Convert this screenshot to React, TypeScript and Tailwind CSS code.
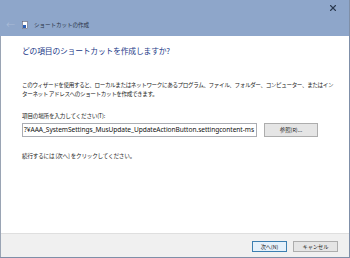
import React from 'react'
import { X } from 'lucide-react'

const JP = { fontFamily: '"Noto Sans CJK JP", "Noto Sans", sans-serif' }

export default function App() {
  return (
    <div
      className="w-[350px] h-[258px] flex flex-col bg-[#8ea6ca] border-r border-b border-[#7f8fa8] overflow-hidden"
      style={JP}
    >
      {/* Title bar */}
      <div className="h-[36px] shrink-0 relative flex items-end pb-[7px] pl-[6px]">
        <span className="text-[9px] leading-none text-[#a9bbd6] mr-[7px]">←</span>
        <svg width="6" height="8" viewBox="0 0 6 8" className="mr-[6px]">
          <rect x="0.5" y="0.5" width="5" height="7" fill="#fff" stroke="#667" strokeWidth="0.6" />
          <rect x="1" y="4" width="3" height="3" fill="#2b5fb5" />
        </svg>
        <span className="text-[5.6px] leading-none text-[#2a3445] tracking-[-0.1px]">ショートカットの作成</span>
        <X size={10} strokeWidth={2.6} className="absolute right-[11px] top-[3px] text-[#2c3a50]" />
      </div>

      {/* Content */}
      <div className="flex-1 flex flex-col bg-white border-l border-[#9aa4b4]">
        <div className="flex-1 flex flex-col pl-[21px] pr-[10px]">
          <div className="mt-[11px] text-[7.8px] leading-none text-[#1c3a88] tracking-[-0.2px]">
            どの項目のショートカットを作成しますか?
          </div>
          <div className="mt-[26px] text-[5.6px] leading-[9px] text-[#222] tracking-[-0.4px] whitespace-nowrap">
            <div>このウィザードを使用すると、ローカルまたはネットワークにあるプログラム、ファイル、フォルダー、コンピューター、またはイン</div>
            <div>ターネット アドレスへのショートカットを作成できます。</div>
          </div>
          <div className="mt-[15px] text-[5.6px] leading-none text-[#222] tracking-[-0.2px]">
            項目の場所を入力してください(T):
          </div>
          <div className="mt-[4px] flex items-center gap-[7px]">
            <div
              className="w-[235px] h-[14px] border border-[#abadb3] flex items-center justify-end overflow-hidden whitespace-nowrap pr-[2px] text-[6.6px] text-[#111] tracking-[-0.05px]"
              style={{ fontFamily: '"Noto Sans", "Noto Sans CJK JP", sans-serif' }}
            >
              ?¥AAA_SystemSettings_MusUpdate_UpdateActionButton.settingcontent-ms
            </div>
            <div className="w-[54px] h-[14px] border border-[#adadad] bg-[#e5e5e5] flex items-center justify-center text-[5.4px] text-[#222]">
              参照(R)...
            </div>
          </div>
          <div className="mt-[17px] text-[5.6px] leading-none text-[#222] tracking-[-0.2px]">
            続行するには [次へ] をクリックしてください。
          </div>
        </div>

        {/* Footer */}
        <div className="h-[24px] shrink-0 bg-[#f0f0f0] border-t border-[#dfdfdf] flex items-center justify-end gap-[6px] pr-[11px] pt-[2px]">
          <div className="w-[35px] h-[11px] border border-[#3c7fb1] bg-[#e5f1fb] flex items-center justify-center text-[5.2px] text-[#222]">
            次へ(N)
          </div>
          <div className="w-[45px] h-[11px] border border-[#adadad] bg-[#e5e5e5] flex items-center justify-center text-[5.2px] text-[#222]">
            キャンセル
          </div>
        </div>
      </div>
    </div>
  )
}
